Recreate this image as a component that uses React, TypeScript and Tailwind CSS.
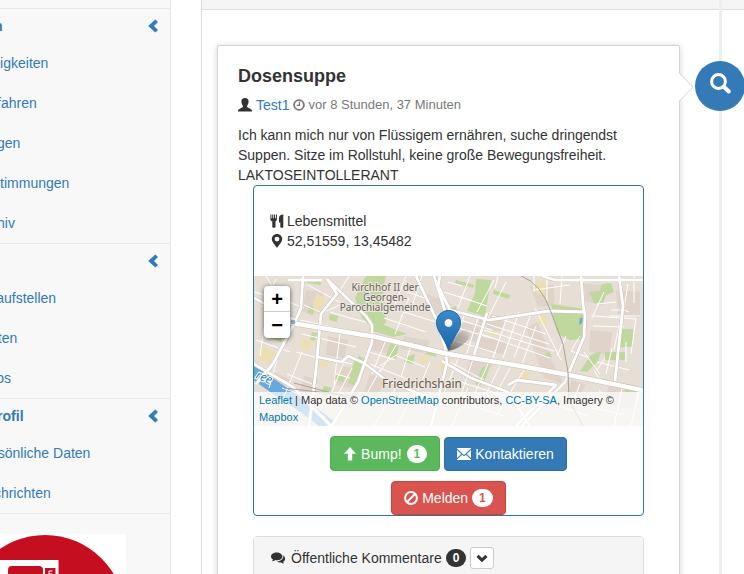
import React from "react";

type IconProps = { className?: string };

const ChevronLeft = ({ className = "" }: IconProps) => (
  <svg viewBox="0 0 14 14" className={`size-3.5 shrink-0 ${className}`} fill="currentColor" aria-hidden="true">
    <path d="M9.3 0.4 12 3.100 8 7 12 10.900 9.300 13.600 2.200 7z" />
  </svg>
);

const UserIcon = () => (
  <svg viewBox="0 0 14 14" className="size-3.5 shrink-0" fill="currentColor" aria-hidden="true">
    <path d="M7 0C4.700 0 3.300 1.400 3.400 3.600c.1 1.700.6 3.200 1.400 4.100.3.500.2 1.300-.3 1.600L1 11.200C.3 11.600 0 12 0 12.700V13.600h14v-.9c0-.7-.3-1.100-1-1.500L9.500 9.300c-.5-.3-.6-1.100-.3-1.600.8-.9 1.300-2.400 1.400-4.100C10.700 1.400 9.300 0 7 0z" />
  </svg>
);

const ClockIcon = () => (
  <svg viewBox="0 0 12 12" className="size-3 shrink-0" fill="none" stroke="currentColor" aria-hidden="true">
    <circle cx="6" cy="6" r="4.900" strokeWidth="1.800" />
    <path d="M6.400 2.800V6.400H3.600" strokeWidth="1.200" />
  </svg>
);

const CutleryIcon = () => (
  <svg viewBox="0 0 14 14" className="size-3.5 shrink-0" fill="currentColor" aria-hidden="true">
    <path d="M.4.4h1v3.800h.8V.4h1.100v3.800h.8V.4h1.100v3.800h.8V.4h.9v4.800c0 1-.5 1.700-1.400 2.100v5.500c0 .5-.4.900-.9.900h-1.400c-.5 0-.9-.4-.9-.9V7.300C1 6.900.4 6.200.4 5.200z" />
    <path d="M13.300.5v12.300c0 .5-.3.900-.8.900h-1.300c-.5 0-.9-.4-.9-.9V8.600H8.900V4.200C8.900 2 10.700.4 13.300.5z" />
  </svg>
);

const PinIcon = () => (
  <svg viewBox="0 0 14 14" className="size-3.5 shrink-0" fill="currentColor" aria-hidden="true">
    <path fillRule="evenodd" d="M7 0C4 0 1.800 2.200 1.800 5c0 3 3.200 5.800 5.200 9 2-3.200 5.200-6 5.200-9C12.200 2.200 10 0 7 0zm0 2.700a2.400 2.400 0 1 1 0 4.800 2.400 2.400 0 0 1 0-4.800z" />
  </svg>
);

const ArrowUpIcon = () => (
  <svg viewBox="0 0 14 14" className="size-3.5 shrink-0" fill="currentColor" aria-hidden="true">
    <path d="M7 0 13 6.800H9.200v6.800H4.900V6.800H1z" />
  </svg>
);

const EnvelopeIcon = () => (
  <svg viewBox="0 0 14 14" className="size-3.5 shrink-0" fill="currentColor" aria-hidden="true">
    <path d="M0 1h14v.6L7 7.900 0 1.600zM0 3.100 4.300 7 0 11zM14 3.100V11L9.700 7zM5.200 7.800 7 9.400l1.800-1.600L14 12.400v.6H0v-.6z" />
  </svg>
);

const BanIcon = () => (
  <svg viewBox="0 0 14 14" className="size-3.5 shrink-0" fill="none" stroke="currentColor" strokeWidth="2" aria-hidden="true">
    <circle cx="7" cy="7" r="5.900" />
    <path d="M3 11 11 3" />
  </svg>
);

const CommentsIcon = () => (
  <svg viewBox="0 0 16 14" className="h-3.5 w-4 shrink-0" fill="currentColor" aria-hidden="true">
    <path d="M5.700 1.500C2.400 1.500 0 3.200 0 5.500c0 1.300.8 2.400 2 3.100-.2.700-.6 1.200-1.200 1.700 1.300 0 2.400-.4 3.300-1.100.5.1 1 .1 1.600.1 3.300 0 5.700-1.600 5.700-3.800S9 1.500 5.700 1.500z" />
    <path d="M12.300 4.300c.5 3.300-2 5.800-6.300 6.200 1 .7 2.200 1.100 3.900 1 .9.700 2 1.100 3.300 1.100-.5-.5-.9-1-1.100-1.600 1.200-.7 2-1.700 2-2.900 0-1.500-.6-2.800-1.800-3.800z" />
  </svg>
);

const ChevronDown = () => (
  <svg viewBox="0 0 12 12" className="size-3 shrink-0" fill="currentColor" aria-hidden="true">
    <path d="M2.600 2.800 6 6.100l3.400-3.300L11.500 5 6 10.200.5 5z" />
  </svg>
);

const SearchIcon = () => (
  <svg viewBox="0 0 21 21" className="size-[21px]" fill="none" stroke="currentColor" aria-hidden="true">
    <circle cx="8.500" cy="8.500" r="6.900" strokeWidth="3" />
    <path d="M13.800 13.800 18.800 18.500" strokeWidth="4" strokeLinecap="round" />
  </svg>
);

const sections = [
  { title: "Suchen", items: ["Fähigkeiten", "Verfahren", "Fragen", "Abstimmungen", "Archiv"] },
  { title: "", items: ["Es aufstellen", "Karten", "Fotos"] },
  { title: "Mein Profil", items: ["Persönliche Daten", "Nachrichten"] },
];

function Logo() {
  return (
    <svg viewBox="0 0 162 162" className="mx-auto mt-5 size-[162px]" role="img" aria-label="Logo">
      <rect width="162" height="162" fill="#fff" />
      <circle cx="81" cy="81" r="80" fill="#c50e1f" />
      <path d="M24 26H94.500V110H24z" fill="#fff" />
      <path d="M48 32H75q4 0 4 4V70H44V36q0-4 4-4z" fill="#c50e1f" />
      <path d="M81 34H91.500V50H81z" fill="#c50e1f" />
      <path d="M88.500 37H85v3h3v3h-4" fill="none" stroke="#fff" strokeWidth="1" />
    </svg>
  );
}

function Sidebar() {
  return (
    <nav className="-ml-20 w-[251px] shrink-0 border-r border-[#e7e7e7] bg-[#f8f8f8] pt-2 text-[#337ab7]">
      {sections.map((s, index) => (
        <section key={index} className="border-t border-[#e7e7e7]">
          <a href="#" aria-label={s.title || "Menü"} className="flex h-[34px] items-center pr-2.5 pl-8 font-bold">
            {s.title}
            <ChevronLeft className="ml-auto" />
          </a>
          <ul>
            {s.items.map((i) => (
              <li key={i}>
                <a href="#" className="flex h-10 items-center pl-14">{i}</a>
              </li>
            ))}
          </ul>
        </section>
      ))}
      <div className="border-t border-[#e7e7e7]">
        <Logo />
      </div>
    </nav>
  );
}

const majorRoads =
  "M0 22l42 23M49 0l-2 32-6 14-22 42-17 20M-2 87l41 24 38 39M68 4H34M73 3l39 37 6 9v17l-14 40-26 44M73 3l10 15-16 20-5 56-7 56M64 81l24 5 6-6 16 7 22 17 57 24M162 0l21 45 8 26 2 16-16 63M180 0l12 38 5 32M186 0l-2 10 12 24 39 10 60-9 36 1M288 0l13 4h88M327 0l2 28 2 12-1 21-19 45-43 44M365 0l4 30-8 75M233 37l-13 42M188 85l29 17 37 14 22 34M254 109l9-5 39 5-40 41";

function StreetMap() {
  return (
    <svg viewBox="0 0 389 150" preserveAspectRatio="xMidYMid slice" className="block h-[150px] w-full" role="img" aria-label="Karte von Friedrichshain">
      <rect width="389" height="150" fill="#e7dfd6" />
      {/* building blocks */}
      <g fill="#dfd3ca">
        <path d="M52 14l18 2-3 22-19-2zM74 60l20 4-4 18-18-3zM88 90l16 3-4 20-18-4zM20 96l16 8-14 14-12-10zM50 100l14 3-3 16-15-4zM120 62l22 4-3 12-21-4zM116 98l14 6-6 18-14-6zM150 60l26 5-6 12-24-4zM206 46l20 4-4 16-18-4zM228 36l24 6-5 14-24-5zM224 60l30 6-5 12-28-5zM276 10l24-1v20l-16 2zM302 30l18 6-3 12zM330 8l20 1v20l-18-3zM362 14l24 2v26l-22-4zM336 54l22 2-3 24-20-5zM284 46l14 40 12 22-20-6-18-50zM354 110l28 4v20l-30-5zM172 18l24 8-8 14-18-6zM318 104l14 4-7 14-12-5zM216 84l22 4-6 14-20-4z" />
      </g>
      <g fill="#ecdfb4">
        <path d="M62 18l9 3-4 14-9-3zM48 62l10 3-3 10-9-3zM8 70l14 7-7 12-12-7zM66 84l9 2-2 6-9-2zM166 78l9 3-2 8-9-3zM186 86l8 2-2 7-8-2zM282 4l10 2-1 14-9-3zM285 38l8 3-1 10-8-4zM268 94l8 2-3 8-7-2zM238 54l7 2-2 5-7-2z" />
      </g>
      {/* parks */}
      <g fill="#c0d79e">
        <path d="M112 0h20l-3 13 3 34-12 6-12-11-7-20zM222 3l15 1-6 36-18-5 8-18zM297 28l34 5 0 30-15 1-12-6-4-13zM335 16l11-1 2-7 9-1 3 9-8 3-3 8-8 1zM367 53h12v18h-13zM337 79l10-4-3 10-11 11-7-1zM351 76h20v8h-20zM371 111h18v5h-18zM54 2l14 3-1 4-14-2zM76 38l8 2-1 6-8-2zM56 30l4 1-1 8-6-2zM16 54l20 5-3 9-18-6zM58 56l5 1-2 8-5-1zM118 44l22 9 13 5-14 3-24-7zM136 68l9 2-3 13-10-3zM152 81l9-3-2 10-9-2zM170 78l10-6 3 9zM100 86l5-6 5 2-9 28-7-4zM70 110l8 2-4 8-7-2zM82 98l10 3-3 5-10-3zM228 92l8-4-4 14-6 8-5-2zM196 32l6-2 1 5-6 1zM240 14l16 5-1 4-16-5zM202 4l18 5-1 3-18-5zM295 75l3 6-8-1z" />
      </g>
      <path d="M326 42q4-2 2 5l-3 2z" fill="#67add2" />
      {/* river */}
      <path d="M-6 92Q15 108 34 120T78 152" fill="none" stroke="#65a9dd" strokeWidth="13" />
      <g fill="none" stroke="#fff" strokeWidth="1">
        <path d="M0 16l30 8 20 8M12 0l12 20M22 3l-14 28M2 64l34 12M10 52l-4 28M30 60l-15 52M46 44l32 7M54 9l33 18M50 29l18 8 20-9M95 0l-15 24M76 36l20 6 16 4M48 58l54 13M42 76l22 6M33 98l30 12M86 57l-6 51M64 80l34 8M82 98l14 4M98 92l-20 38M90 86l-18 44M28 112l38 13M48 76l-20 50" />
        <path d="M118 58l-5 24M132 64l-14 34M112 75l29 9M126 90l18-12M144 66l-18 30M158 66l-11 35M116 88l44 18M126 94l-21 38M143 80l28 11M144 108l-24 42M160 116l-17 34M176 86l-16 38M152 0l-14 36M168 0l-10 30M148 14l28 10M137 32l45 14M130 42l42 14M155 22l-14 36" />
        <path d="M194 6l14 4M190 16l28 9M204 20l29 10M216 0l-12 32M240 4l-17 32M252 6l-18 36M200 42l38 12M201 51l36 11M192 62l50 15M210 40l-12 30M224 42l-12 38M224 57l72 25M238 40l54 18M233 48l62 20M230 54l70 21M254 38l-15 44M265 36l-16 46M277 38l-17 44M281 32l26 52M282 50l-15 41M196 86l34 18M206 78l-16 39M219 83l-13 39M234 88l-16 36M246 90l-16 32M256 92l-21 39M270 94l-28 46M200 104l70 22M190 121l60 19M214 112l-16 38" />
        <path d="M244 0l-3 12M280 0v16M293 0v25M308 0l-2 28M280 14l36-5M326 60l-9 15 16 6M312 60l-9 20M340 40l42 3M339 50l31 1M342 28l20-2M350 16l-12 26M366 46l-6 28M382 42l-5 36M356 40h30M357 34h13l5 2M374 8l-5 30M380 0v27M358 72l-6 26M351 82l-8 12M372 66v20M343 86l32 8M330 76l16 22M326 108l-8 20M345 114l12 16M369 108l-9 42M386 110l-9 40M318 128l50 10M340 94l8 13M295 126l38 14M262 118l35 10" />
      </g>
      <path d={majorRoads} fill="none" stroke="#cbc2b9" strokeWidth="3.800" strokeLinejoin="round" />
      <path d={majorRoads} fill="none" stroke="#fff" strokeWidth="2.800" strokeLinejoin="round" />
      <path d="M38 47l84 14 72 17 73 12 48 9 78 16" fill="none" stroke="#c8beb4" strokeWidth="5.500" />
      <path d="M38 47l84 14 72 17 73 12 48 9 78 16" fill="none" stroke="#fff" strokeWidth="4.500" />
      <path d="M267 0q20 7 30 36l12 32 5 28 1 28 14 26M30 112l70 8M40 107l60 16" fill="none" stroke="#a7a29d" strokeWidth="1" />
      <circle cx="39" cy="46" r="3" fill="#93b5ce" stroke="#fff" />
      <text x="1" y="102" transform="rotate(22 1 102)" fill="#2980bf" stroke="#fff" strokeWidth="2" paintOrder="stroke" fontSize="12" fontStyle="italic" fontFamily="Noto Sans, sans-serif">ree</text>
      <g fill="#64615d" stroke="#eee8df" strokeWidth="2" paintOrder="stroke" textAnchor="middle" fontFamily="Noto Sans, sans-serif" fontSize="10">
        <text x="131" y="15">Kirchhof II der</text>
        <text x="131" y="25">Georgen-</text>
        <text x="131" y="35">Parochialgemeinde</text>
        <text x="168" y="112" fill="#655b50" fontSize="12">Friedrichshain</text>
      </g>
      {/* marker */}
      <defs>
        <linearGradient id="pin" x1="0" y1="0" x2="0" y2="1">
          <stop offset="0" stopColor="#3b8bcb" />
          <stop offset="1" stopColor="#1d65a8" />
        </linearGradient>
        <linearGradient id="shade" x1="0" y1="1" x2="1" y2="0">
          <stop offset="0" stopColor="#000" stopOpacity=".55" />
          <stop offset="1" stopColor="#000" stopOpacity="0" />
        </linearGradient>
      </defs>
      <path d="M194 75Q201 54 213 54Q219 59 212 66Q205 73 194 75z" fill="url(#shade)" />
      <path d="M194.500 34.500C187.500 34.500 182.500 40 182.500 46.500C182.500 55 189 59 194.500 74C200 59 206.500 55 206.500 46.500C206.500 40 201.500 34.500 194.500 34.500z" fill="url(#pin)" stroke="#2368a6" />
      <circle cx="194.500" cy="47" r="4.300" fill="#fff" stroke="#276fae" strokeWidth=".7" />
    </svg>
  );
}

function MapView() {
  return (
    <div className="relative">
      <StreetMap />
      <div className="absolute top-2.5 left-2.5 w-[26px] overflow-hidden rounded-sm bg-white text-center text-xl leading-[26px] font-bold text-black shadow-[0_1px_5px_rgba(0,0,0,0.65)]">
        <button type="button" aria-label="Vergrößern" className="block h-[26px] w-full border-b border-[#ccc]">+</button>
        <button type="button" aria-label="Verkleinern" className="block h-[26px] w-full">−</button>
      </div>
      <p className="absolute inset-x-0 bottom-0 bg-white/70 px-[5px] text-[11px] leading-[17px] text-[#333]">
        <a href="#" className="text-[#0078a8]">Leaflet</a> | Map data © <a href="#" className="text-[#0078a8]">OpenStreetMap</a> contributors,{" "}
        <a href="#" className="text-[#0078a8]">CC-BY-SA</a>, Imagery © <a href="#" className="text-[#0078a8]">Mapbox</a>
      </p>
    </div>
  );
}

const buttonBase = "inline-flex items-center gap-1 rounded-sm border px-3 text-white";
const badgeBase = "rounded-full px-[7px] text-xs leading-[18px] font-bold";

export default function App() {
  return (
    <div className="flex h-screen overflow-hidden bg-white font-['Liberation_Sans',Arial,sans-serif] text-sm leading-5 text-[#333]">
      <Sidebar />
      <main className="relative ml-[30px] min-w-0 flex-1 border-l border-[#ddd]">
        <div className="h-2.5 border-b border-[#ddd] bg-[#f5f5f5]" />
        <div className="absolute inset-y-0 right-[22px] w-[3px] bg-[#eee]" />
        <div className="relative -mr-px flex items-start pt-[35px] pl-[15px]">
          <article className="relative min-w-0 flex-1 rounded-xs border border-[#d4d4d4] bg-white p-5 shadow-[0_1px_6px_rgba(0,0,0,0.175)]">
            <svg viewBox="0 0 15 28" className="absolute top-[27px] -right-[15px] h-7 w-[15px]" aria-hidden="true">
              <path d="M0 0 14 14 0 28z" fill="#fff" />
              <path d="M.5 0 14 14 .5 28" fill="none" stroke="#d4d4d4" />
            </svg>
            <h4 className="text-lg leading-5 font-bold">Dosensuppe</h4>
            <p className="mt-[9px] mb-2.5 flex items-center gap-1">
              <UserIcon />
              <a href="#" className="text-[#337ab7]">Test1</a>
              <small className="flex items-center gap-[3px] text-[13px] leading-5 text-[#777]">
                <ClockIcon />
                vor 8 Stunden, 37 Minuten
              </small>
            </p>
            <p>
              Ich kann mich nur von Flüssigem ernähren, suche dringendst Suppen. Sitze im Rollstuhl, keine große
              Bewegungsfreiheit. LAKTOSEINTOLLERANT
            </p>
            <div className="mx-[15px]">
              <section className="rounded-sm border border-[#31769c]">
                <div className="px-4 py-[25px]">
                  <p className="flex items-center gap-[3px]"><CutleryIcon />Lebensmittel</p>
                  <p className="flex items-center gap-[3px]"><PinIcon />52,51559, 13,45482</p>
                </div>
                <MapView />
                <div className="flex flex-wrap items-end justify-center gap-x-1 gap-y-2.5 px-10 pt-2.5">
                  <button type="button" className={`${buttonBase} h-[35px] border-[#4cae4c] bg-[#5cb85c]`}>
                    <ArrowUpIcon />
                    Bump!
                    <span className={`${badgeBase} ml-px bg-white text-[#5cb85c]`}>1</span>
                  </button>
                  <button type="button" className={`${buttonBase} h-[34px] border-[#2e6da4] bg-[#337ab7]`}>
                    <EnvelopeIcon />
                    Kontaktieren
                  </button>
                  <button type="button" className={`${buttonBase} h-[34px] border-[#d43f3a] bg-[#d9534f]`}>
                    <BanIcon />
                    Melden
                    <span className={`${badgeBase} bg-white text-[#d9534f]`}>1</span>
                  </button>
                </div>
              </section>
              <section className="mt-5 rounded-sm border border-[#ddd]">
                <header className="flex items-center gap-1 bg-[#f5f5f5] px-[17px] py-2.5">
                  <CommentsIcon />
                  <h5>Öffentliche Kommentare</h5>
                  <span className={`${badgeBase} bg-[#333] text-white`}>0</span>
                  <button type="button" aria-label="Kommentare anzeigen" className="flex h-[22px] w-6 items-center justify-center rounded-[3px] border border-[#ccc] bg-white">
                    <ChevronDown />
                  </button>
                </header>
              </section>
            </div>
          </article>
          <button type="button" aria-label="Suchen" className="mt-4 ml-[15px] flex size-[50px] shrink-0 items-start justify-center rounded-full bg-[#337ab7] pt-3 text-white">
            <SearchIcon />
          </button>
        </div>
      </main>
    </div>
  );
}
